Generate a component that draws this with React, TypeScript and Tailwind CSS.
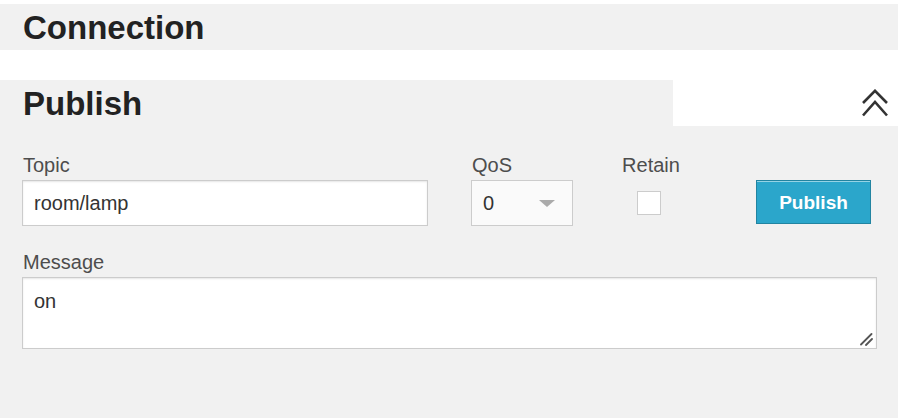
import React from 'react'

export default function App() {
  return (
    <div
      className="w-[899px] h-[418px] bg-white pt-[4px] flex flex-col overflow-hidden"
      style={{ fontFamily: '"Liberation Sans", Arial, sans-serif' }}
    >
      {/* Connection section (collapsed) */}
      <div className="h-[46px] w-[898px] bg-[#f1f1f1] px-[23px]">
        <h2 className="text-[33px] leading-[47px] font-bold text-[#222]">Connection</h2>
      </div>

      {/* Publish header */}
      <div className="mt-[30px] flex h-[46px] w-[899px]">
        <div className="w-[673px] bg-[#f1f1f1] px-[23px]">
          <h2 className="text-[33px] leading-[47px] font-bold text-[#222]">Publish</h2>
        </div>
        <div className="flex flex-1 items-center justify-end pr-[11px]">
          <svg width="26" height="28" viewBox="0 0 26 28" fill="none" stroke="#333" strokeWidth="2.6">
            <polyline points="1,14 13,1.8 25,14" />
            <polyline points="1,26.5 13,13 25,26.5" />
          </svg>
        </div>
      </div>

      {/* Publish body */}
      <div className="flex-1 w-[898px] bg-[#f1f1f1] pt-[27px] pl-[22px]">
        <div className="flex">
          <div className="w-[406px]">
            <label className="block text-[20px] leading-[24px] text-[#4d4d4d] mb-[3px] pl-[1px]">Topic</label>
            <input
              defaultValue="room/lamp"
              className="block w-[406px] h-[46px] bg-white border border-[#ccc] px-[11px] text-[20px] text-[#333] outline-none shadow-[inset_0_1px_2px_rgba(0,0,0,0.1)]"
            />
          </div>
          <div className="ml-[43px] w-[102px]">
            <label className="block text-[20px] leading-[24px] text-[#4d4d4d] mb-[3px] pl-[1px]">QoS</label>
            <div className="flex h-[46px] items-center justify-between bg-[#fafafa] border border-[#ccc] pl-[11px] pr-[17px]">
              <span className="text-[20px] text-[#333]">0</span>
              <span className="block w-0 h-0 border-l-[8px] border-r-[8px] border-t-[7px] border-l-transparent border-r-transparent border-t-[#aaa]" />
            </div>
          </div>
          <div className="ml-[49px] w-[58px] flex flex-col items-center">
            <label className="block text-[20px] leading-[24px] text-[#4d4d4d] mb-[3px]">Retain</label>
            <div className="flex h-[46px] items-center">
              <div className="w-[24px] h-[24px] bg-white border border-[#ccc] ml-[-4px]" />
            </div>
          </div>
          <div className="ml-[76px] pt-[27px]">
            <button className="w-[115px] h-[44px] pt-[3px] bg-[#2ba6cb] border border-[#2284a1] text-white font-bold text-[19px] shadow-[inset_0_1px_0_rgba(255,255,255,0.5)]">
              Publish
            </button>
          </div>
        </div>

        <div className="mt-[24px]">
          <label className="block text-[20px] leading-[24px] text-[#4d4d4d] mb-[3px] pl-[1px]">Message</label>
          <div className="relative w-[855px]">
            <textarea
              defaultValue="on"
              className="block w-[855px] h-[72px] resize-none bg-white border border-[#ccc] px-[11px] pt-[11px] text-[20px] leading-[24px] text-[#333] outline-none shadow-[inset_0_1px_2px_rgba(0,0,0,0.1)]"
            />
            <svg
              className="absolute right-[4px] bottom-[3px]"
              width="13"
              height="13"
              viewBox="0 0 13 13"
              stroke="#555"
              strokeWidth="1.8"
              strokeLinecap="round"
            >
              <line x1="1" y1="11.5" x2="11.5" y2="1" />
              <line x1="6" y1="12" x2="12" y2="6" />
            </svg>
          </div>
        </div>
      </div>
    </div>
  )
}
